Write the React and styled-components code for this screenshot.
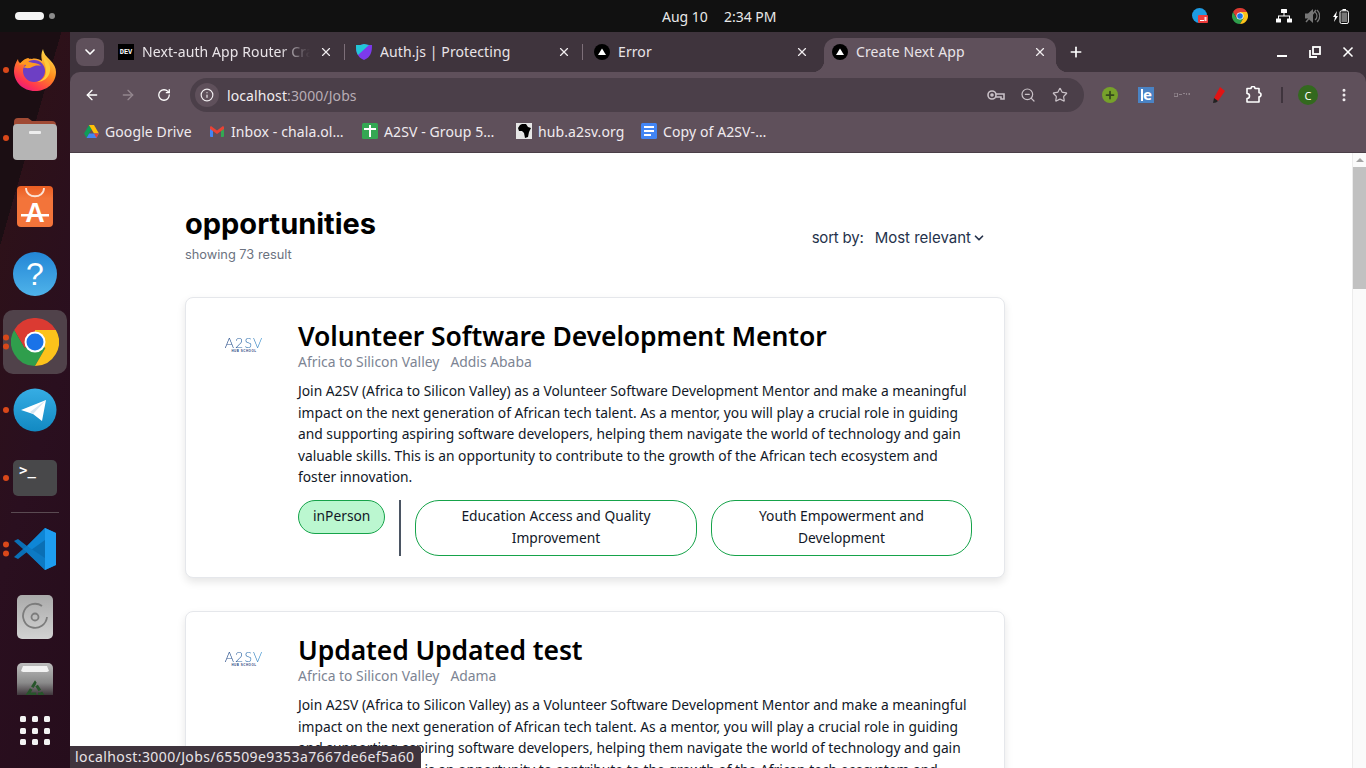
import React from "react";
import styled, { createGlobalStyle } from "styled-components";
import { ArrowLeft, ArrowRight, RotateCw, Info, X, Plus, ChevronDown, ZoomOut, Star, EllipsisVertical } from "lucide-react";

const Global = createGlobalStyle`
  html, body { margin: 0; padding: 0; background: #fff; }
  * { box-sizing: border-box; }
`;

const uiFont = `"Noto Sans", "Open Sans", sans-serif`;
const headFont = `Inter, "Liberation Sans", sans-serif`;

const Screen = styled.div`
  width: 1366px;
  height: 768px;
  overflow: hidden;
  display: flex;
  flex-direction: column;
  background: #111;
  font-family: ${uiFont};
`;

/* gnome top bar */
const TopBar = styled.div`
  height: 32px;
  flex: none;
  background: #111111;
  display: grid;
  grid-template-columns: 647px auto 1fr;
  align-items: center;
  color: #e8e8e8;
  font-size: 14px;
  padding: 0 0 0 15px;
`;
const Workspaces = styled.div`
  display: flex;
  align-items: center;
  gap: 5px;
`;
const ActivePill = styled.div`
  width: 29px;
  height: 8px;
  border-radius: 4px;
  background: #f4f4f4;
`;
const WsDot = styled.div`
  width: 6px;
  height: 6px;
  border-radius: 50%;
  background: #8c8c8c;
`;
const Clock = styled.div`
  display: flex;
  gap: 16px;
`;
const Tray = styled.div`
  display: flex;
  align-items: center;
  justify-content: flex-end;
  padding-right: 11px;
`;
const TraySlot = styled.div`
  width: ${(p) => p.$w}px;
  height: 32px;
  display: flex;
  align-items: center;
  justify-content: center;
`;

const Desk = styled.div`
  flex: 1;
  min-height: 0;
  display: flex;
`;

/* dock */
const Dock = styled.div`
  width: 70px;
  flex: none;
  display: flex;
  flex-direction: column;
  background: linear-gradient(106deg, #1b0e13 59px, #2d1119 59px, #2a0f1f 150px, #260d1c 100%);
`;
const DockList = styled.div`
  height: 663px;
  padding-top: 4px;
  overflow: hidden;
  flex: none;
`;
const DockItem = styled.div`
  position: relative;
  height: 68px;
  display: flex;
  align-items: center;
  justify-content: center;
`;
const ActiveTile = styled.div`
  width: 64px;
  height: 64px;
  border-radius: 10px;
  display: flex;
  align-items: center;
  justify-content: center;
  background: #50424a;
`;
const RunDots = styled.div`
  position: absolute;
  left: 3px;
  top: 50%;
  transform: translateY(-50%);
  display: flex;
  flex-direction: column;
  gap: 3px;
`;
const RunDot = styled.div`
  width: 6px;
  height: 6px;
  border-radius: 50%;
  background: #d9481a;
`;
const DockSep = styled.div`
  height: 1px;
  margin: 0 11px 2px;
  background: #5a4a52;
`;
const AppGrid = styled.div`
  display: grid;
  grid-template-columns: repeat(3, 6px);
  grid-auto-rows: 6px;
  column-gap: 6px;
  row-gap: 5.5px;
  justify-content: center;
  margin-top: 21px;
`;
const AppDot = styled.div`
  border-radius: 1.5px;
  background: #f3f3f3;
`;

/* chrome window */
const Browser = styled.div`
  position: relative;
  flex: 1;
  min-width: 0;
  display: flex;
  flex-direction: column;
  background: #3f343d;
`;
const TabStrip = styled.div`
  height: 40px;
  flex: none;
  display: flex;
  align-items: flex-end;
  color: #e9e4e8;
  font-size: 14px;
`;
const TabMenu = styled.div`
  width: 28px;
  height: 28px;
  margin: 0 6px 6px 6px;
  border-radius: 8px;
  background: #5f505b;
  color: #fff;
  display: flex;
  align-items: center;
  justify-content: center;
`;
const Tab = styled.div`
  position: relative;
  width: ${(p) => p.$w}px;
  height: 34px;
  padding: 0 ${(p) => (p.$active ? 8 : 14)}px 6px 8px;
  display: flex;
  align-items: center;
  gap: 8px;
  background: ${(p) => (p.$active ? "#5f505b" : "transparent")};
  border-radius: ${(p) => (p.$active ? "12px 12px 0 0" : "0")};
  ${(p) =>
    p.$active &&
    `
    &::before, &::after {
      content: "";
      position: absolute;
      bottom: 0;
      width: 12px;
      height: 12px;
    }
    &::before { left: -12px; background: radial-gradient(circle at 0 0, transparent 12px, #5f505b 12.5px); }
    &::after { right: -12px; background: radial-gradient(circle at 100% 0, transparent 12px, #5f505b 12.5px); }
  `}
  ${(p) =>
    p.$sep &&
    `
    &::after {
      content: "";
      position: absolute;
      right: 3px;
      top: 6px;
      width: 1px;
      height: 16px;
      background: #7d6f79;
    }
  `}
`;
const TabTitle = styled.div`
  flex: 1;
  min-width: 0;
  padding-bottom: 2px;
  white-space: nowrap;
  overflow: hidden;
  letter-spacing: 0.1px;
  ${(p) =>
    p.$fade &&
    `
    -webkit-mask-image: linear-gradient(90deg, #000 82%, transparent 100%);
    mask-image: linear-gradient(90deg, #000 82%, transparent 100%);
  `}
`;
const TabClose = styled.div`
  width: 16px;
  height: 16px;
  flex: none;
  display: flex;
  align-items: center;
  justify-content: center;
  color: #f0ecef;
`;
const NewTab = styled.div`
  width: 16px;
  height: 34px;
  margin-left: 12px;
  padding-bottom: 6px;
  display: flex;
  align-items: center;
  color: #fff;
`;
const WinControls = styled.div`
  margin-left: auto;
  margin-right: 2px;
  height: 34px;
  padding-bottom: 6px;
  display: flex;
  align-items: center;
  color: #fff;
`;
const WinBtn = styled.div`
  width: 33px;
  display: flex;
  align-items: center;
  justify-content: center;
`;

const Toolbar = styled.div`
  height: 40px;
  flex: none;
  padding: 6px 0 0 0;
  background: #5f505b;
  border-radius: 10px 10px 0 0;
  display: flex;
  align-items: stretch;
  color: #f1edf0;
`;
const NavBtn = styled.div`
  width: 35px;
  height: 34px;
  display: flex;
  align-items: center;
  justify-content: center;
  color: ${(p) => (p.$dim ? "#94878f" : "#fff")};
`;
const NavGroup = styled.div`
  display: flex;
  padding-left: 4px;
  margin-right: 9px;
  gap: 1px;
`;
const Omnibox = styled.div`
  width: 894px;
  height: 34px;
  border-radius: 17px;
  background: #4b3f49;
  display: flex;
  align-items: center;
  padding: 0 15px 0 5px;
  font-size: 14px;
`;
const SiteChip = styled.div`
  width: 24px;
  height: 24px;
  border-radius: 50%;
  background: #5f505b;
  display: flex;
  align-items: center;
  justify-content: center;
  margin-right: 8px;
`;
const Url = styled.div`
  flex: 1;
  color: #f1edf0;
  letter-spacing: 0.1px;
  span { color: #b8adb5; }
`;
const OmniIcons = styled.div`
  display: flex;
  align-items: center;
  gap: 14px;
  color: #c9c1c7;
`;
const OmniIcon = styled.div`
  width: 18px;
  display: flex;
  justify-content: center;
`;
const Extensions = styled.div`
  display: flex;
  align-items: center;
  height: 34px;
  padding-left: 8px;
`;
const ExtSlot = styled.div`
  width: ${(p) => p.$w || 36}px;
  display: flex;
  align-items: center;
  justify-content: center;
`;
const ToolSep = styled.div`
  width: 2px;
  height: 16px;
  background: #3f343d;
  margin: 0 15px 0 9px;
`;
const Avatar = styled.div`
  width: 20px;
  height: 20px;
  border-radius: 50%;
  background: #33691e;
  color: #fff;
  font-size: 11px;
  display: flex;
  align-items: center;
  justify-content: center;
`;
const MenuDots = styled.div`
  margin-left: 18px;
  display: flex;
  color: #f1edf0;
`;
const GreenExt = styled.div`
  width: 16px;
  height: 16px;
  border-radius: 50%;
  background: #76a12a;
  color: #34491b;
  display: flex;
  align-items: center;
  justify-content: center;
`;
const BlueExt = styled.div`
  position: relative;
  width: 16px;
  height: 16px;
  padding-left: 3px;
  background: #4a83c4;
  color: #fff;
  font: 700 15px/14px ${uiFont};
  text-align: center;
  &::before {
    content: "";
    position: absolute;
    left: 3px;
    top: 2px;
    width: 1.5px;
    height: 12px;
    background: #fff;
  }
`;

const Bookmarks = styled.div`
  height: 41px;
  flex: none;
  background: #5f505b;
  border-bottom: 1px solid #4a3e47;
  display: flex;
  align-items: center;
  padding: 0 0 2px 13px;
  font-size: 14px;
  color: #f0ebef;
`;
const Bookmark = styled.div`
  width: ${(p) => p.$w}px;
  display: flex;
  align-items: center;
  gap: 6px;
  white-space: nowrap;
  letter-spacing: 0.1px;
`;
const FavSlot = styled.div`
  width: 16px;
  height: 16px;
  flex: none;
  display: flex;
  align-items: center;
  justify-content: center;
`;

/* page */
const Viewport = styled.div`
  flex: 1;
  min-height: 0;
  display: flex;
  background: #fff;
`;
const Page = styled.div`
  flex: 1;
  min-width: 0;
  overflow: hidden;
  padding: 53px 0 0 115px;
`;
const Scrollbar = styled.div`
  width: 14px;
  flex: none;
  background: #fafafa;
  border-left: 1px solid #ececec;
  display: flex;
  flex-direction: column;
  align-items: center;
`;
const ScrollUp = styled.div`
  width: 0;
  height: 0;
  margin: 5px 0 5px;
  border-left: 4px solid transparent;
  border-right: 4px solid transparent;
  border-bottom: 4px solid #a3a3a3;
`;
const ScrollThumb = styled.div`
  width: 14px;
  height: 122px;
  background: #c1c1c1;
`;
const Column = styled.div`
  width: 820px;
  display: flex;
  flex-direction: column;
  gap: 33px;
`;
const ListHead = styled.div`
  display: flex;
  justify-content: space-between;
  align-items: flex-start;
  padding-right: 19px;
  height: 58px;
`;
const PageTitle = styled.h1`
  margin: 0;
  font: 700 29px/36px ${headFont};
  color: #000;
`;
const Count = styled.div`
  margin-top: 3px;
  font: 400 12.8px/20px ${headFont};
  color: #6b7280;
`;
const Sort = styled.div`
  padding-top: 21px;
  display: flex;
  align-items: center;
  font: 400 15px/22px ${headFont};
  color: #25324b;
`;
const SortLabel = styled.span`
  letter-spacing: -0.2px;
`;
const SortValue = styled.span`
  margin: 0 1px 0 11px;
  color: #25324b;
`;
const Card = styled.article`
  height: 281px;
  flex: none;
  border: 1px solid #e5e7eb;
  border-radius: 8px;
  background: #fff;
  box-shadow: 0 4px 8px rgba(0, 0, 0, 0.1);
  padding: 22px 0 0 36px;
  display: flex;
`;
const LogoCol = styled.div`
  width: 76px;
  flex: none;
  padding-top: 16px;
`;
const Logo = styled.div`
  width: 44px;
  text-align: center;
  line-height: 1;
`;
const LogoName = styled.div`
  font: 300 14px/14px Lato, "Liberation Sans", sans-serif;
  letter-spacing: 1.2px;
  background: linear-gradient(90deg, #1f3f7c 0%, #2f6aa8 50%, #4aa3dc 100%);
  -webkit-background-clip: text;
  background-clip: text;
  color: transparent;
`;
const LogoSub = styled.div`
  font: 700 3px/3px "Liberation Sans", sans-serif;
  letter-spacing: 0.5px;
  color: #1f3f7c;
`;
const Body = styled.div`
  flex: 1;
  min-width: 0;
`;
const JobTitle = styled.h2`
  margin: 0;
  font: 600 26.5px/32px ${uiFont};
  letter-spacing: -0.1px;
  color: #000;
  white-space: nowrap;
`;
const Meta = styled.div`
  display: flex;
  gap: 11px;
  font-size: 13.9px;
  line-height: 20px;
  color: #7c8493;
`;
const Desc = styled.div`
  margin: 8px 0 12px;
  font-size: 13.8px;
  line-height: 21.6px;
  color: #111827;
`;
const DescLine = styled.div`
  white-space: nowrap;
`;
const Tags = styled.div`
  display: flex;
  align-items: flex-start;
  gap: 14px;
`;
const Tag = styled.div`
  width: ${(p) => p.$w}px;
  flex: none;
  padding: 4px 14px;
  border: 1px solid #16a34a;
  border-radius: 24px;
  background: ${(p) => (p.$fill ? "#bbf7d0" : "#fff")};
  font-size: 13.8px;
  line-height: 21.6px;
  text-align: center;
  color: #111827;
  height: ${(p) => (p.$fill ? 34 : 56)}px;
`;
const TagDivider = styled.div`
  width: 2px;
  height: 56px;
  background: #4b5563;
`;
const StatusBubble = styled.div`
  position: absolute;
  left: 0;
  bottom: 0;
  height: 22px;
  width: 351px;
  padding: 0 0 0 5px;
  background: #3f343d;
  border-radius: 0 3px 0 0;
  color: #e9e4e8;
  font-size: 14px;
  letter-spacing: 0.4px;
  line-height: 22px;
  white-space: nowrap;
`;

const ChromeLogo = ({ size, ring = 10.5, core = 8.5 }) => (
  <svg width={size} height={size} viewBox="0 0 48 48">
    <path fill="#db3a32" d="M24 24 13.6 30 3.2 12A24 24 0 0 1 44.8 12H24Z" />
    <path fill="#2f9e4c" d="M24 24 34.4 30 24 48A24 24 0 0 1 3.2 12L13.6 30Z" />
    <path fill="#fcc21b" d="M24 24V12H44.8A24 24 0 0 1 24 48L34.4 30Z" />
    <circle cx="24" cy="24" r={ring} fill="#fff" />
    <circle cx="24" cy="24" r={core} fill="#1a73e8" />
  </svg>
);

const Firefox = () => (
  <svg width="44" height="44" viewBox="0 0 44 44">
    <defs>
      <linearGradient id="ffb" x1="0.8" y1="0" x2="0.2" y2="1">
        <stop offset="0" stopColor="#ffe34d" />
        <stop offset="0.45" stopColor="#ff8a1e" />
        <stop offset="0.8" stopColor="#ff3550" />
        <stop offset="1" stopColor="#e31587" />
      </linearGradient>
    </defs>
    <path fill="url(#ffb)" d="M30 1c1 5 3 7 7 11 4 4 6 8 6 12 0 11-9 19-21 19C10 43 1 34 1 23c0-5 2-9 4-12 0 2 1 4 3 4 3-3 7-5 11-4 3-1 7 0 10 2-1-4-1-8 1-12Z" />
    <circle cx="21" cy="23" r="11" fill="#6d3fc4" />
    <path fill="#ff9a20" d="M6 17c4-6 8-7 10-7-1 2-1 3 0 4 4 1 10 1 12 4-4-1-7 0-9 1-3 2-7 1-9 0 1 0 3-1 3-2-2-1-5-1-7 0Z" />
    <path fill="#ffcb3a" d="M30 9c5 3 8 8 7 14-1 7-7 11-13 11 6-2 9-6 9-11 0-5-2-9-3-14Z" />
  </svg>
);

const FilesIcon = () => (
  <svg width="46" height="44" viewBox="0 0 46 44">
    <path fill="#a04a34" d="M2 6a4 4 0 0 1 4-4h10l4 3h20a4 4 0 0 1 4 4v10H2Z" />
    <rect x="1" y="8" width="44" height="36" rx="4" fill="#b5b5b5" />
    <rect x="17" y="15" width="12" height="3" rx="1" fill="#eee" />
  </svg>
);

const StoreIcon = () => (
  <svg width="38" height="42" viewBox="0 0 38 42">
    <defs>
      <linearGradient id="st" x1="0" y1="0" x2="0" y2="1">
        <stop offset="0" stopColor="#ea5d22" />
        <stop offset="0.3" stopColor="#f3743a" />
        <stop offset="1" stopColor="#f3743a" />
      </linearGradient>
    </defs>
    <rect x="1" y="1" width="36" height="41" rx="4" fill="url(#st)" />
    <path d="M10 3c0 11 18 11 18 0" fill="none" stroke="#fbe3d6" strokeWidth="1.8" />
    <text x="19" y="37" textAnchor="middle" fontFamily="Liberation Sans" fontWeight="700" fontSize="27" fill="#fff">A</text>
    <rect x="5" y="29" width="28" height="2.5" fill="#fff" />
  </svg>
);

const HelpIcon = () => (
  <svg width="46" height="46" viewBox="0 0 46 46">
    <defs>
      <linearGradient id="hb" x1="0" y1="0" x2="0" y2="1">
        <stop offset="0" stopColor="#2386d6" />
        <stop offset="1" stopColor="#4fb3ea" />
      </linearGradient>
    </defs>
    <circle cx="23" cy="23" r="22" fill="url(#hb)" />
    <text x="23" y="34" textAnchor="middle" fontFamily="Liberation Sans" fontSize="32" fill="#fff">?</text>
  </svg>
);

const TelegramIcon = () => (
  <svg width="44" height="44" viewBox="0 0 44 44">
    <defs>
      <linearGradient id="tg" x1="0" y1="0" x2="0" y2="1">
        <stop offset="0" stopColor="#36ade4" />
        <stop offset="1" stopColor="#1289c2" />
      </linearGradient>
    </defs>
    <circle cx="22" cy="22" r="21.5" fill="url(#tg)" />
    <path fill="#fff" d="M8 22 33 12 29 33 20 26 17 25Z" />
    <path fill="#d6e6f1" d="M33 12 17 24l3 2Z" />
  </svg>
);

const TerminalBox = styled.div`
  width: 44px;
  height: 36px;
  border-radius: 5px;
  background: #48484a;
  padding: 3px 0 0 6px;
`;
const PromptText = styled.div`
  font: 700 14px/14px "DejaVu Sans Mono", monospace;
  color: #fff;
`;
const TerminalIcon = () => (
  <TerminalBox>
    <PromptText>&gt;_</PromptText>
  </TerminalBox>
);

const VSCode = () => (
  <svg width="44" height="44" viewBox="0 0 44 44">
    <path fill="#0a6fb5" d="M32 1 14 19 5 12l-4 2 9 8-9 8 4 2 9-7 18 18 11-5V6Z" />
    <path fill="#1e9df0" d="M32 1 43 6v32l-11 5Z" />
    <path fill="#0e86d6" d="M32 1v12L18 23l-4-4Z" />
    <path fill="#0d7ac4" d="M32 31v12L10 22l4-3Z" />
  </svg>
);

const DiscIcon = () => (
  <svg width="38" height="46" viewBox="0 0 38 46">
    <defs>
      <linearGradient id="dg" x1="0" y1="0" x2="0" y2="1">
        <stop offset="0" stopColor="#aaaaaa" />
        <stop offset="1" stopColor="#d2d2d2" />
      </linearGradient>
    </defs>
    <rect x="1" y="1" width="36" height="44" rx="5" fill="url(#dg)" />
    <path d="M26 12A12 12 0 1 0 31 23" fill="none" stroke="#7c7c7c" strokeWidth="1.8" />
    <circle cx="19" cy="23" r="3.5" fill="none" stroke="#7c7c7c" strokeWidth="1.8" />
  </svg>
);

const TrashIcon = () => (
  <svg width="36" height="44" viewBox="0 0 36 44" style={{ display: "block" }}>
    <defs>
      <linearGradient id="tr" x1="0" y1="0" x2="0" y2="1">
        <stop offset="0" stopColor="#bdbdbd" />
        <stop offset="0.45" stopColor="#8a8a8a" />
        <stop offset="0.75" stopColor="#3a3036" />
      </linearGradient>
    </defs>
    <path fill="url(#tr)" d="M5 0h26a5 5 0 0 1 5 5v39H0V5a5 5 0 0 1 5-5Z" />
    <path fill="#f2f2f2" d="M6 3h24l2 5-2 1H6L4 8Z" />
    <path fill="none" stroke="#27552a" strokeWidth="3" strokeDasharray="6 2" d="M11 31l7-11 7 11Z" />
  </svg>
);

const DriveFav = () => (
  <svg width="15" height="13" viewBox="0 0 16 14">
    <path fill="#0f9d58" d="M5.3 0h5.400L5.400 9.200 2.700 14 0 9.200Z" />
    <path fill="#ffc107" d="M10.700 0 16 9.200h-5.300L5.300 0Z" />
    <path fill="#4285f4" d="M2.700 14 5.400 9.200H16L13.300 14Z" />
    <path fill="#ea4335" d="M10.700 9.200H16L13.300 14Z" />
  </svg>
);

const VercelFav = () => (
  <svg width="16" height="16" viewBox="0 0 16 16">
    <circle cx="8" cy="8" r="8" fill="#000" />
    <path d="M8 4.500 12 11H4Z" fill="#fff" />
  </svg>
);

const DevFav = styled.div`
  width: 16px;
  height: 16px;
  background: #000;
  color: #fff;
  font: 700 7px/16px "Liberation Mono", monospace;
  text-align: center;
  flex: none;
`;

const ShieldFav = () => (
  <svg width="16" height="16" viewBox="0 0 16 16">
    <path fill="#7c3aed" d="M8 0c2 1 5 1 8 1 0 7-1 12-8 15C1 13 0 8 0 1c3 0 6 0 8-1Z" />
    <path fill="#22c7d6" d="M0 1c3 0 6 0 8-1l5 1L2 11C0 8 0 5 0 1Z" />
  </svg>
);

const GmailFav = () => (
  <svg width="14" height="11" viewBox="0 0 14 11">
    <path fill="#4285f4" d="M0 2h3v9H1a1 1 0 0 1-1-1Z" />
    <path fill="#34a853" d="M11 2h3v8a1 1 0 0 1-1 1h-2Z" />
    <path fill="#ea4335" d="M0 1.500C0 .3 1 0 2 .7L7 4.400 12 .7c1-.7 2-.4 2 .8V3L7 8 0 3Z" />
  </svg>
);

const SheetsFav = () => (
  <svg width="16" height="16" viewBox="0 0 16 16">
    <rect width="16" height="16" rx="1.500" fill="#34a853" />
    <path fill="#fff" d="M7 2h2v3h5v2H9v7H7V7H2V5h5Z" />
  </svg>
);

const AfricaFav = () => (
  <svg width="16" height="16" viewBox="0 0 16 16">
    <rect width="16" height="16" fill="#e6e6e6" />
    <path fill="#000" d="M6 1h4l2 3 3 1-2 4-1 5-3 1-1-5-2-2-3 0-1-3 2-3Z" />
  </svg>
);

const DocsFav = () => (
  <svg width="16" height="16" viewBox="0 0 16 16">
    <rect width="16" height="16" rx="1.500" fill="#4285f4" />
    <path fill="#fff" d="M3 3h10v2H3ZM3 7h10v2H3ZM3 11h7v2H3Z" />
  </svg>
);

const Puzzle = () => (
  <svg width="18" height="18" viewBox="0 0 18 18" fill="none" stroke="#fff" strokeWidth="1.6" strokeLinejoin="round">
    <path d="M2 2.500h4a2 2 0 0 1 4 0h4v4.200a2 2 0 0 1 0 4V16H2v-3.500a2.500 2.500 0 0 0 0-5Z" />
  </svg>
);

const KeyIcon = () => (
  <svg width="18" height="12" viewBox="0 0 18 12" fill="none" stroke="#c9c1c7" strokeWidth="1.6">
    <circle cx="5" cy="6" r="4" />
    <circle cx="5" cy="6" r="1" fill="#c9c1c7" />
    <path d="M9 5h8v5h-3V8H9" />
  </svg>
);

const Marker = () => (
  <svg width="14" height="17" viewBox="0 0 14 17">
    <path fill="#e01414" d="M9 0l5 4-7 10-4-3Z" />
    <path fill="#222" d="M3 11l4 3-2 1.500-3 .5Z" />
  </svg>
);

const FaintExt = () => (
  <svg width="16" height="4" viewBox="0 0 16 4" fill="#8f838b">
    <rect x="0" y="0" width="3.500" height="3.500" fill="none" stroke="#8f838b" />
    <rect x="5" y="1" width="3" height="1" />
    <rect x="9" y="0" width="2" height="1" />
    <rect x="12" y="0" width="1" height="2" />
    <rect x="14.500" y="0" width="1.500" height="2" />
  </svg>
);

const TrayBlue = () => (
  <svg width="16" height="16" viewBox="0 0 16 16">
    <circle cx="7.500" cy="7.500" r="7.500" fill="#1d9be2" />
    <rect x="6" y="7" width="10" height="8" rx="1" fill="#ee3b3b" />
    <rect x="8" y="12" width="4" height="1" fill="#fff" />
    <rect x="12.500" y="9" width="2" height="4" fill="#fff" fillOpacity="0.8" />
  </svg>
);

const TrayNetwork = () => (
  <svg width="16" height="14" viewBox="0 0 16 14" fill="#fff">
    <rect x="5" y="0" width="6" height="4" rx="0.500" />
    <rect x="0" y="9.500" width="5" height="4" rx="0.500" />
    <rect x="11" y="9.500" width="5" height="4" rx="0.500" />
    <path d="M7.500 4h1v2.500H14V10h-1V7.500H3V10H2V6.500h5.500Z" />
  </svg>
);

const TrayMute = () => (
  <svg width="15" height="14" viewBox="0 0 15 14" fill="none">
    <path fill="#777" d="M0 4.500h3L8 0v14L3 9.500H0Z" />
    <path stroke="#777" strokeWidth="1.200" d="M10 3a5 5 0 0 1 0 8M12 1a8 8 0 0 1 0 12" />
    <path stroke="#777" strokeWidth="1.400" d="M1 13 11 1" />
  </svg>
);

const TrayBattery = () => (
  <svg width="16" height="15" viewBox="0 0 16 15" fill="none">
    <path fill="#fff" d="M4 2 0 8h2l-1 5 4-6H3Z" />
    <rect x="7" y="1.800" width="8.400" height="12.700" rx="1.500" stroke="#fff" />
    <rect x="9.500" y="0" width="3.500" height="1.500" fill="#fff" />
    <rect x="8.500" y="3.500" width="5.500" height="9.500" fill="#ddd" fillOpacity="0.500" />
  </svg>
);

const dockApps = [
  { key: "ff", icon: <Firefox />, dots: 1 },
  { key: "files", icon: <FilesIcon />, dots: 1 },
  { key: "store", icon: <StoreIcon /> },
  { key: "help", icon: <HelpIcon /> },
  { key: "chrome", icon: <ChromeLogo size={48} />, dots: 2, active: true },
  { key: "tg", icon: <TelegramIcon />, dots: 1 },
  { key: "term", icon: <TerminalIcon />, dots: 1 },
  { key: "sep" },
  { key: "code", icon: <VSCode />, dots: 2 },
  { key: "disc", icon: <DiscIcon /> },
  { key: "trash", icon: <TrashIcon /> },
];

const tabs = [
  { title: "Next-auth App Router Crash", fav: <DevFav>DEV</DevFav>, w: 238, sep: true, fade: true },
  { title: "Auth.js | Protecting", fav: <ShieldFav />, w: 238, sep: true },
  { title: "Error", fav: <VercelFav />, w: 238 },
  { title: "Create Next App", fav: <VercelFav />, w: 232, active: true },
];

const bookmarks = [
  { label: "Google Drive", w: 126, fav: <DriveFav /> },
  { label: "Inbox - chala.ol…", w: 153, fav: <GmailFav /> },
  { label: "A2SV - Group 5…", w: 154, fav: <SheetsFav /> },
  { label: "hub.a2sv.org", w: 125, fav: <AfricaFav /> },
  { label: "Copy of A2SV-…", w: 150, fav: <DocsFav /> },
];

const description = [
  "Join A2SV (Africa to Silicon Valley) as a Volunteer Software Development Mentor and make a meaningful",
  "impact on the next generation of African tech talent. As a mentor, you will play a crucial role in guiding",
  "and supporting aspiring software developers, helping them navigate the world of technology and gain",
  "valuable skills. This is an opportunity to contribute to the growth of the African tech ecosystem and",
  "foster innovation.",
];

const jobs = [
  { title: "Volunteer Software Development Mentor", city: "Addis Ababa" },
  { title: "Updated Updated test", city: "Adama" },
];

export default function App() {
  return (
    <Screen>
      <Global />
      <TopBar>
        <Workspaces>
          <ActivePill />
          <WsDot />
        </Workspaces>
        <Clock>
          <span>Aug 10</span>
          <span>2:34 PM</span>
        </Clock>
        <Tray>
          <TraySlot $w={18}><TrayBlue /></TraySlot>
          <TraySlot $w={62}><ChromeLogo size={16} /></TraySlot>
          <TraySlot $w={26}><TrayNetwork /></TraySlot>
          <TraySlot $w={30}><TrayMute /></TraySlot>
          <TraySlot $w={28}><TrayBattery /></TraySlot>
        </Tray>
      </TopBar>
      <Desk>
        <Dock>
          <DockList>
            {dockApps.map((a) =>
              a.key === "sep" ? (
                <DockSep key={a.key} />
              ) : (
                <DockItem key={a.key}>
                  {a.dots && (
                    <RunDots>
                      {Array.from({ length: a.dots }).map((_, i) => (
                        <RunDot key={i} />
                      ))}
                    </RunDots>
                  )}
                  {a.active ? <ActiveTile>{a.icon}</ActiveTile> : a.icon}
                </DockItem>
              )
            )}
          </DockList>
          <AppGrid>
            {Array.from({ length: 9 }).map((_, i) => (
              <AppDot key={i} />
            ))}
          </AppGrid>
        </Dock>
        <Browser>
          <TabStrip>
            <TabMenu><ChevronDown size={16} strokeWidth={2.5} /></TabMenu>
            {tabs.map((t) => (
              <Tab key={t.title} $w={t.w} $active={t.active} $sep={t.sep}>
                {t.fav}
                <TabTitle $fade={t.fade}>{t.title}</TabTitle>
                <TabClose><X size={14} strokeWidth={2} /></TabClose>
              </Tab>
            ))}
            <NewTab><Plus size={16} strokeWidth={2.5} /></NewTab>
            <WinControls>
              <WinBtn>
                <svg width="12" height="12" viewBox="0 0 12 12" fill="#fff">
                  <rect x="1" y="9" width="10" height="2" />
                </svg>
              </WinBtn>
              <WinBtn>
                <svg width="12" height="12" viewBox="0 0 12 12" fill="none" stroke="#fff" strokeWidth="1.800">
                  <rect x="4" y="1" width="7" height="7" />
                  <path d="M1 4v7h7" />
                </svg>
              </WinBtn>
              <WinBtn><X size={16} strokeWidth={2.5} /></WinBtn>
            </WinControls>
          </TabStrip>
          <Toolbar>
            <NavGroup>
              <NavBtn><ArrowLeft size={16} strokeWidth={2} /></NavBtn>
              <NavBtn $dim><ArrowRight size={16} strokeWidth={2} /></NavBtn>
              <NavBtn><RotateCw size={14} strokeWidth={2.2} /></NavBtn>
            </NavGroup>
            <Omnibox>
              <SiteChip><Info size={14} strokeWidth={2} /></SiteChip>
              <Url>localhost<span>:3000/Jobs</span></Url>
              <OmniIcons>
                <OmniIcon><KeyIcon /></OmniIcon>
                <OmniIcon><ZoomOut size={16} strokeWidth={1.800} /></OmniIcon>
                <OmniIcon><Star size={16} strokeWidth={1.800} /></OmniIcon>
              </OmniIcons>
            </Omnibox>
            <Extensions>
              <ExtSlot><GreenExt><Plus size={12} strokeWidth={3.500} /></GreenExt></ExtSlot>
              <ExtSlot><BlueExt>e</BlueExt></ExtSlot>
              <ExtSlot><FaintExt /></ExtSlot>
              <ExtSlot><Marker /></ExtSlot>
              <ExtSlot><Puzzle /></ExtSlot>
              <ToolSep />
              <Avatar>C</Avatar>
              <MenuDots><EllipsisVertical size={16} strokeWidth={2.500} /></MenuDots>
            </Extensions>
          </Toolbar>
          <Bookmarks>
            {bookmarks.map((b) => (
              <Bookmark key={b.label} $w={b.w}>
                <FavSlot>{b.fav}</FavSlot>
                {b.label}
              </Bookmark>
            ))}
          </Bookmarks>
          <Viewport>
            <Page>
              <Column>
                <ListHead>
                  <div>
                    <PageTitle>opportunities</PageTitle>
                    <Count>showing 73 result</Count>
                  </div>
                  <Sort>
                    <SortLabel>sort by:</SortLabel>
                    <SortValue>Most relevant</SortValue>
                    <ChevronDown size={14} strokeWidth={3} />
                  </Sort>
                </ListHead>
                {jobs.map((job) => (
                  <Card key={job.title}>
                    <LogoCol>
                      <Logo>
                        <LogoName>A2SV</LogoName>
                        <LogoSub>HUB SCHOOL</LogoSub>
                      </Logo>
                    </LogoCol>
                    <Body>
                      <JobTitle>{job.title}</JobTitle>
                      <Meta>
                        <span>Africa to Silicon Valley</span>
                        <span>{job.city}</span>
                      </Meta>
                      <Desc>
                        {description.map((line) => (
                          <DescLine key={line}>{line}</DescLine>
                        ))}
                      </Desc>
                      <Tags>
                        <Tag $fill $w={87}>inPerson</Tag>
                        <TagDivider />
                        <Tag $w={282}>Education Access and Quality Improvement</Tag>
                        <Tag $w={261}>Youth Empowerment and Development</Tag>
                      </Tags>
                    </Body>
                  </Card>
                ))}
              </Column>
            </Page>
            <Scrollbar>
              <ScrollUp />
              <ScrollThumb />
            </Scrollbar>
          </Viewport>
          <StatusBubble>localhost:3000/Jobs/65509e9353a7667de6ef5a60</StatusBubble>
        </Browser>
      </Desk>
    </Screen>
  );
}
